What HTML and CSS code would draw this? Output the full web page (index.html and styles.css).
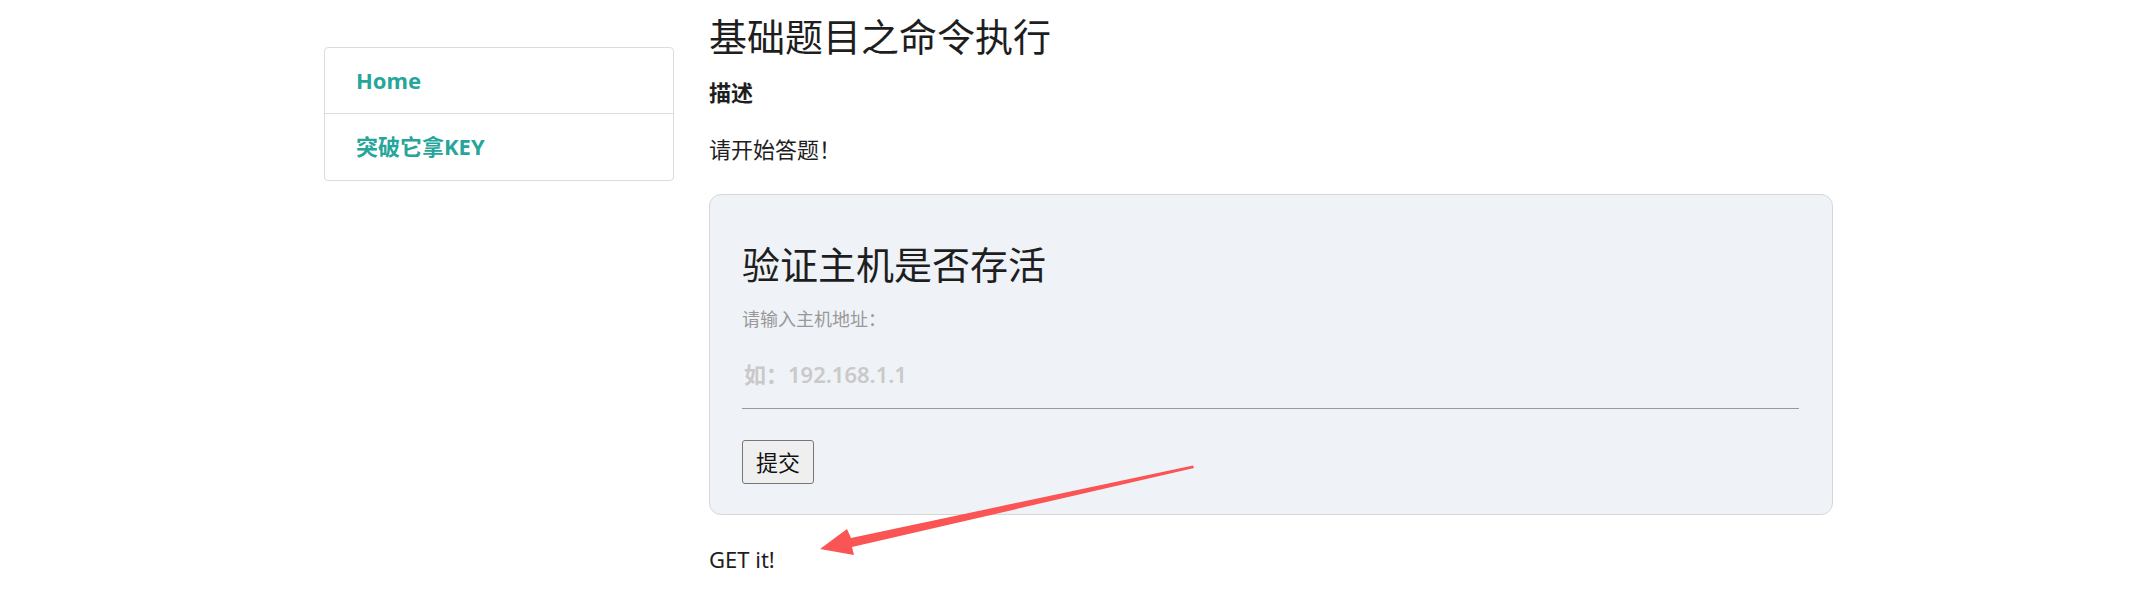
FILE: index.html
```html
<!DOCTYPE html>
<html lang="zh-CN">
  <head>
    <meta charset="UTF-8" />
    <meta name="viewport" content="width=device-width, initial-scale=1.0" />
    <title>基础题目之命令执行</title>
    <link rel="stylesheet" href="styles.css">
  </head>
  <body>
    <div class="page">
      <!-- 左侧菜单 -->
      <nav class="side-menu">
        <a href="#" class="menu-item">Home</a>
        <a href="#" class="menu-item">突破它拿KEY</a>
      </nav>

      <!-- 题目内容 -->
      <main class="content">
        <h1 class="task-title">基础题目之命令执行</h1>
        <h4 class="desc-title">描述</h4>
        <p class="desc-text">请开始答题！</p>

        <div class="task-box">
          <h2 class="box-title">验证主机是否存活</h2>
          <form class="ping-form" onsubmit="return false">
            <label class="ping-label" for="ip">请输入主机地址：</label>
            <input id="ip" class="ping-input" type="text" placeholder="如：192.168.1.1" />
            <button class="ping-btn" type="submit">提交</button>
          </form>
        </div>

        <p class="result">GET it!</p>
      </main>
    </div>

    <!-- 截图上的标注箭头 -->
    <svg class="mark-arrow" width="2155" height="614" viewBox="0 0 2155 614">
      <polygon
        fill="#fa5454"
        points="1193,465.5 1194,468 852,547 854,555 820,549 847,529 851,538"
      />
    </svg>
  </body>
</html>
```

FILE: styles.css
```css
body {
  margin: 0;
  font-family: 'Noto Sans', 'Noto Sans CJK SC', sans-serif;
  color: #1e1e1e;
  background: #fff;
}

.page {
  display: flex;
  align-items: flex-start;
  gap: 35px;
  padding-left: 324px;
}

/* 左侧菜单 */
.side-menu {
  display: flex;
  flex-direction: column;
  width: 350px;
  margin-top: 47px;
  box-sizing: border-box;
  border: 1px solid #dcdcdc;
  border-radius: 4px;
}

.menu-item {
  padding: 17px 31px;
  line-height: 31px;
  font-size: 22px;
  font-weight: bold;
  color: #26a69a;
  text-decoration: none;
}

.menu-item + .menu-item {
  border-top: 1px solid #dcdcdc;
  padding-bottom: 18px;
}

/* 题目内容 */
.content {
  width: 1124px;
  padding-top: 14px;
}

.task-title {
  margin: 0;
  font-size: 38px;
  line-height: 45px;
  font-weight: normal;
}

.desc-title {
  margin: 18px 0 0;
  font-size: 22px;
  line-height: 30px;
  font-weight: bold;
}

.desc-text {
  margin: 27px 0 0;
  font-size: 22px;
  line-height: 30px;
}

.task-box {
  margin-top: 30px;
  padding: 47px 33px 30px 32px;
  background: #eff2f7;
  border: 1px solid #d6d6d6;
  border-radius: 12px;
}

.box-title {
  margin: 0;
  font-size: 38px;
  line-height: 45px;
  font-weight: normal;
}

.ping-form {
  display: flex;
  flex-direction: column;
  align-items: flex-start;
}

.ping-label {
  margin-top: 19px;
  font-size: 18px;
  line-height: 26px;
  color: #999;
}

.ping-input {
  width: 100%;
  height: 69px;
  margin-top: 8px;
  padding: 0 2px;
  box-sizing: border-box;
  border: none;
  border-bottom: 1px solid #999;
  background: transparent;
  font-family: 'Noto Sans', 'Noto Sans CJK SC', sans-serif;
  font-size: 22px;
  outline: none;
}

.ping-input::placeholder {
  color: #c9c9c9;
  font-weight: 600;
}

.ping-btn {
  margin-top: 31px;
  padding: 6px 13px;
  line-height: 30px;
  font-family: 'Noto Sans', 'Noto Sans CJK SC', sans-serif;
  font-size: 22px;
  color: #111;
  background: #efefef;
  border: 1px solid #767676;
  border-radius: 3px;
}

.result {
  margin: 29px 0 0;
  font-size: 22px;
  line-height: 30px;
}

/* 标注箭头 */
.mark-arrow {
  position: absolute;
  top: 0;
  left: 0;
  pointer-events: none;
}
```
